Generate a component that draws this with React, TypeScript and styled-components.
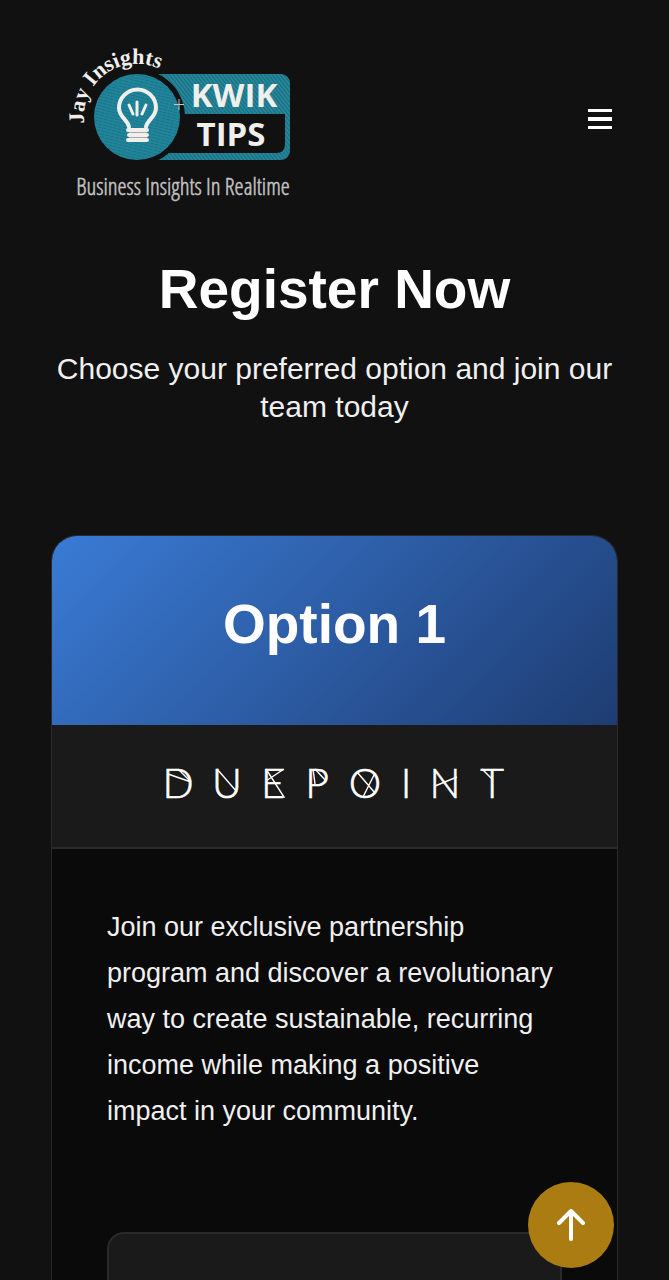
import React from 'react';
import styled, { createGlobalStyle } from 'styled-components';

const GlobalStyle = createGlobalStyle`
  * {
    box-sizing: border-box;
  }
  body {
    margin: 0;
    background: #111111;
    color: #ffffff;
    font-family: "Liberation Sans", Arial, Helvetica, sans-serif;
  }
`;

// Styled Components
const Page = styled.div`
  padding: 0 51px;
  overflow: hidden;
`;

const Header = styled.header`
  display: flex;
  align-items: center;
  justify-content: space-between;
  padding: 40px 0 0 9px;
`;

const LogoLink = styled.a`
  display: block;
  svg {
    display: block;
  }
`;

const MenuButton = styled.button`
  display: flex;
  padding: 6px;
  margin-top: -12px;
  border: none;
  background: none;
  color: #ffffff;
  cursor: pointer;
`;

const Intro = styled.section`
  padding-top: 47px;
  text-align: center;
`;

const Title = styled.h1`
  margin: 0;
  font-size: 55px;
  line-height: 64px;
`;

const Subtitle = styled.p`
  margin: 29px 0 0;
  font-size: 30px;
  line-height: 38px;
  color: #f0f0f0;
`;

const Card = styled.article`
  margin-top: 109px;
  border: 1px solid #2a2a2a;
  border-radius: 26px;
  background: #0a0a0a;
  overflow: hidden;
`;

const CardHeader = styled.div`
  padding: 56px 24px 69px;
  background: linear-gradient(135deg, #3a7bd5 0%, #1e3c72 100%);
  text-align: center;
`;

const CardTitle = styled.h2`
  margin: 0;
  font-size: 55px;
  line-height: 64px;
`;

const BrandStrip = styled.div`
  display: flex;
  justify-content: center;
  padding: 32px 0 33px;
  background: #1a1a1a;
  border-bottom: 2px solid #2a2a2a;
`;

const CardBody = styled.div`
  padding: 55px;
`;

const Description = styled.p`
  margin: 0;
  font-size: 27px;
  line-height: 46px;
  color: #f0f0f0;
`;

const Panel = styled.div`
  margin-top: 98px;
  min-height: 160px;
  border: 2px solid #2a2a2a;
  border-radius: 17px;
  background: #1a1a1a;
`;

const ScrollTopButton = styled.button`
  position: fixed;
  right: 55px;
  bottom: 12px;
  display: flex;
  align-items: center;
  justify-content: center;
  width: 86px;
  height: 86px;
  padding: 0;
  border: none;
  border-radius: 50%;
  background: #aa7c11;
  color: #ffffff;
  cursor: pointer;
`;

const KwikTipsLogo: React.FC = () => (
  <svg width="240" height="170" viewBox="60 40 240 170" role="img" aria-label="Jay Insights Kwik Tips">
    <defs>
      <pattern id="stitch" width="3" height="3" patternUnits="userSpaceOnUse" patternTransform="rotate(-38)">
        <rect width="3" height="3" fill="#25869a" />
        <rect width="1" height="3" fill="#1a6c7e" />
      </pattern>
      <pattern id="weave" width="5" height="3" patternUnits="userSpaceOnUse" patternTransform="rotate(14)">
        <rect width="5" height="3" fill="#20849a" />
        <rect width="4" height="1" fill="#1b7488" />
      </pattern>
      <path id="arc" d="M84.3 123.5 A53 53 0 0 1 166 72.5" />
    </defs>
    <rect x="150" y="74" width="140" height="86" rx="9" fill="url(#stitch)" />
    <path d="M160 114H285V144Q285 153 276 153H160Z" fill="#111111" />
    <circle cx="137" cy="117" r="48" fill="#111111" />
    <circle cx="137" cy="117" r="43" fill="url(#weave)" />
    {/* bulb */}
    <g fill="none" stroke="#f1efec" strokeWidth="4" strokeLinecap="round">
      <path d="M129 127C128 120 119 117 119 108A18 18 0 0 1 156 108C156 117 147 120 146 127" />
      <path d="M128 130H147M129 135H147M128 140H147" />
      <path d="M129 105L133 114M137 102V115M146 105L142 114" strokeWidth="3" />
    </g>
    <path d="M129 132.5H147M129 137.5H147" stroke="#a9a7a4" strokeWidth="1" />
    <path d="M174 104.5H184M179 99V110" stroke="#c9c9c9" strokeWidth="1" />
    <text fill="#f1efec" fontFamily="Liberation Serif, serif" fontWeight="700" fontSize="22">
      <textPath href="#arc">Jay Insights</textPath>
    </text>
    <g fill="#f1efec" fontFamily="Open Sans, sans-serif" fontWeight="700" fontSize="33" textAnchor="middle">
      <text x="234" y="107">KWIK</text>
      <text x="231" y="146">TIPS</text>
    </g>
    <text
      x="183"
      y="195"
      fill="#c4c4c4"
      stroke="#c4c4c4"
      strokeWidth="0.5"
      fontFamily="Open Sans Condensed Light, Liberation Sans Narrow, sans-serif"
      fontSize="23"
      textAnchor="middle"
    >
      Business Insights In Realtime
    </text>
  </svg>
);

const brandLetters = [
  { char: 'D', x: 177 },
  { char: 'U', x: 226 },
  { char: 'E', x: 272 },
  { char: 'P', x: 316 },
  { char: 'O', x: 364 },
  { char: 'I', x: 405 },
  { char: 'N', x: 444 },
  { char: 'T', x: 491 },
];

const DuepointLogo: React.FC = () => (
  <svg width="360" height="57" viewBox="154 757 360 57" role="img" aria-label="Duepoint">
    <g
      fill="#ffffff"
      stroke="#ffffff"
      strokeWidth="0.6"
      fontFamily="Lato, sans-serif"
      fontWeight="300"
      fontSize="41"
      textAnchor="middle"
    >
      {brandLetters.map((letter) => (
        <text key={letter.x} x={letter.x} y="798">{letter.char}</text>
      ))}
    </g>
    <g stroke="#ffffff" strokeWidth="1.4" fill="none">
      <path d="M167 774L190 782L177 769" />
      <path d="M216 769L236 792" />
      <path d="M265 769L283 797H265M265 781L283 769" />
      <path d="M312 769L314 784M314 769L325 781" />
      <path d="M356 772L374 793M374 773L362 797" />
      <path d="M434 786L456 777" />
      <path d="M481 769L491 779" />
    </g>
  </svg>
);

const App: React.FC = () => {
  const scrollToTop = () => window.scrollTo({ top: 0, behavior: 'smooth' });

  return (
    <>
      <GlobalStyle />
      <Page>
        <Header>
          <LogoLink href="/">
            <KwikTipsLogo />
          </LogoLink>
          <MenuButton type="button" aria-label="Open menu">
            <svg width="24" height="20" viewBox="0 0 24 20" fill="currentColor">
              <path d="M0 0H24V3H0ZM0 8H24V12H0ZM0 17H24V20H0Z" />
            </svg>
          </MenuButton>
        </Header>
        <main>
          <Intro>
            <Title>Register Now</Title>
            <Subtitle>Choose your preferred option and join our team today</Subtitle>
          </Intro>
          <Card>
            <CardHeader>
              <CardTitle>Option 1</CardTitle>
            </CardHeader>
            <BrandStrip>
              <DuepointLogo />
            </BrandStrip>
            <CardBody>
              <Description>
                Join our exclusive partnership program and discover a revolutionary way to create
                sustainable, recurring income while making a positive impact in your community.
              </Description>
              <Panel />
            </CardBody>
          </Card>
        </main>
      </Page>
      <ScrollTopButton type="button" aria-label="Back to top" onClick={scrollToTop}>
        <svg
          width="30"
          height="32"
          viewBox="0 0 30 32"
          fill="none"
          stroke="currentColor"
          strokeWidth="4"
          strokeLinecap="round"
          strokeLinejoin="round"
        >
          <path d="M15 30V2M3 14L15 2L27 14" />
        </svg>
      </ScrollTopButton>
    </>
  );
};

export default App;
